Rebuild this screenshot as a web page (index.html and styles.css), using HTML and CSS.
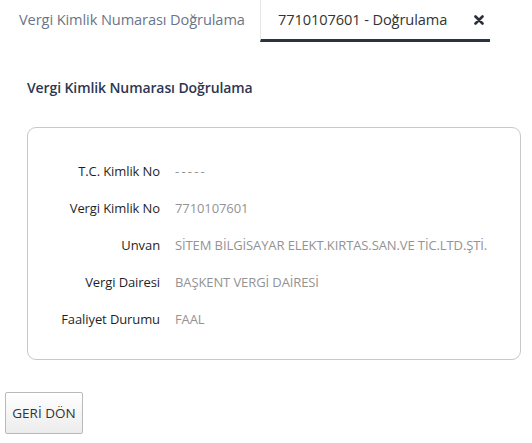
FILE: index.html
```html
<!DOCTYPE html>
<html lang="tr">
<head>
<meta charset="utf-8">
<link rel="stylesheet" href="styles.css">
</head>
<body>
<div class="tabs">
  <div class="tab">Vergi Kimlik Numarası Doğrulama</div>
  <div class="tab active">
    <span>7710107601 - Doğrulama</span>
    <svg class="close" width="10" height="10" viewBox="0 0 10 10"><path d="M1.5 1.5 L8.5 8.5 M8.5 1.5 L1.5 8.5" stroke="#2b2f38" stroke-width="2.6" stroke-linecap="round"/></svg>
  </div>
</div>
<h1 class="title">Vergi Kimlik Numarası Doğrulama</h1>
<div class="card">
  <div class="row"><div class="lbl">T.C. Kimlik No</div><div class="val dashes">-----</div></div>
  <div class="row"><div class="lbl">Vergi Kimlik No</div><div class="val">7710107601</div></div>
  <div class="row"><div class="lbl">Unvan</div><div class="val">SİTEM BİLGİSAYAR ELEKT.KIRTAS.SAN.VE TİC.LTD.ŞTİ.</div></div>
  <div class="row"><div class="lbl">Vergi Dairesi</div><div class="val">BAŞKENT VERGİ DAİRESİ</div></div>
  <div class="row"><div class="lbl">Faaliyet Durumu</div><div class="val">FAAL</div></div>
</div>
<button class="back">GERİ DÖN</button>
</body>
</html>
```
FILE: styles.css
```css
* { box-sizing: border-box; }
body {
  margin: 0;
  width: 532px;
  height: 443px;
  background: #fff;
  font-family: "Open Sans", "Noto Sans", sans-serif;
  overflow: hidden;
}
.tabs {
  display: flex;
  height: 42px;
}
.tab {
  font-size: 14.6px;
  color: #6b7587;
  padding: 9px 0 0 19px;
  width: 260px;
  letter-spacing: -0.1px;
}
.tab.active {
  width: 230px;
  color: #333;
  border-left: 1px solid #e6e6e6;
  border-bottom: 3px solid #2b3340;
  padding: 9px 0 0 17px;
  display: flex;
  align-items: flex-start;
}
.tab.active span { flex: 1; }
.close { margin: 6px 6px 0 0; }
.title {
  margin: 36px 0 0 27px;
  font-size: 14px;
  font-weight: 600;
  color: #2c3752;
  letter-spacing: -0.1px;
  line-height: 20px;
}
.card {
  margin: 29px 0 0 27px;
  width: 494px;
  height: 233px;
  border: 1px solid #c8c8c8;
  border-radius: 9px;
  padding: 33px 0 0 0;
  display: flex;
  flex-direction: column;
  gap: 17px;
}
.row {
  display: grid;
  grid-template-columns: 132px 1fr;
  column-gap: 15px;
  font-size: 13px;
  line-height: 20px;
  letter-spacing: -0.1px;
}
.lbl { text-align: right; color: #1f1f1f; }
.val { color: #939393; }
.dashes { letter-spacing: 2.2px; }
.back {
  margin: 32px 0 0 5px;
  width: 78px;
  height: 42px;
  border: 1px solid #b9b9b9;
  border-radius: 2px;
  background: linear-gradient(#fff, #ececec);
  font-family: "Open Sans", sans-serif;
  font-size: 13.5px;
  color: #333;
  padding: 0;
}
```
